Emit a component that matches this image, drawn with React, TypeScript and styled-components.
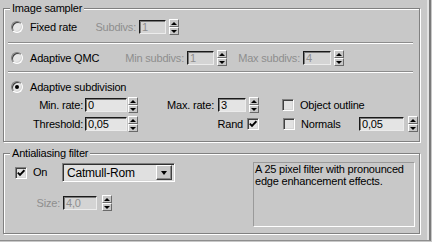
import React from 'react';
import styled, { createGlobalStyle } from 'styled-components';

const GlobalStyle = createGlobalStyle`
  html, body {
    margin: 0;
    padding: 0;
    background: #c8c8c8;
  }
  body {
    font-family: 'Liberation Sans', Arial, sans-serif;
    font-size: 11px;
    letter-spacing: -0.2px;
    color: #000;
  }
`;

const Rollout = styled.div`
  box-sizing: border-box;
  width: 431px;
  height: 241px;
  padding: 8px 0 0 3px;
  background: #c8c8c8;
  border-right: 2px solid #7a7a7a;
  border-bottom: 1px solid #8e8e8e;
  box-shadow: inset -2px 0 0 #e2e2e2;
`;

const GroupBox = styled.div<{ $h: number; $mt?: number }>`
  position: relative;
  box-sizing: border-box;
  width: 417px;
  height: ${(p) => p.$h}px;
  margin-top: ${(p) => p.$mt ?? 0}px;
  border: 1px solid #808080;
  box-shadow: inset 1px 1px 0 #fff, 1px 1px 0 #fff;
`;

const SamplerBody = styled.div`
  padding-left: 7px;
`;

const FilterBody = styled.div`
  display: flex;
  align-items: flex-start;
`;

const GroupTitle = styled.span`
  position: absolute;
  top: -7px;
  left: 6px;
  padding: 0 2px;
  line-height: 13px;
  background: #c8c8c8;
`;

const Row = styled.div<{ $h?: number; $mt?: number }>`
  display: flex;
  align-items: center;
  height: ${(p) => p.$h ?? 16}px;
  margin-top: ${(p) => p.$mt ?? 0}px;
`;

const Separator = styled.div<{ $mt: number }>`
  margin: ${(p) => p.$mt}px 0 0 -3px;
  width: 405px;
  border-top: 1px solid #8c8c8c;
  border-bottom: 1px solid #fff;
`;

const Option = styled.label<{ $w: number }>`
  display: flex;
  align-items: center;
  gap: 7px;
  width: ${(p) => p.$w}px;
  line-height: 13px;
`;

const RadioCircle = styled.span<{ $on?: boolean }>`
  position: relative;
  box-sizing: border-box;
  width: 12px;
  height: 12px;
  border-radius: 50%;
  border: 1px solid;
  border-color: #808080 #fff #fff #808080;
  box-shadow: inset 1px 1px 0 #404040, inset -1px -1px 0 #d6d6d6;
  background: #e6e6e6;
  flex: none;
  &::after {
    content: '';
    display: ${(p) => (p.$on ? 'block' : 'none')};
    position: absolute;
    left: 3px;
    top: 3px;
    width: 4px;
    height: 4px;
    border-radius: 50%;
    background: #000;
  }
`;

const Label = styled.span<{ $w?: number; $right?: boolean; $off?: boolean; $pr?: number; $ml?: number }>`
  display: block;
  box-sizing: border-box;
  width: ${(p) => (p.$w ? `${p.$w}px` : 'auto')};
  margin-left: ${(p) => p.$ml ?? 0}px;
  padding-right: ${(p) => p.$pr ?? 0}px;
  text-align: ${(p) => (p.$right ? 'right' : 'left')};
  color: ${(p) => (p.$off ? '#8e8e8e' : '#000')};
  white-space: nowrap;
  line-height: 13px;
  flex: none;
`;

const Field = styled.div<{ $w: number; $off?: boolean }>`
  box-sizing: border-box;
  width: ${(p) => p.$w}px;
  height: 14px;
  padding-left: 2px;
  border: 1px solid;
  border-color: #1a1a1a #ececec #ececec #1a1a1a;
  box-shadow: inset 1px 1px 0 #7a7a7a;
  background: ${(p) => (p.$off ? '#d4d4d4' : '#e4e4e4')};
  color: ${(p) => (p.$off ? '#8e8e8e' : '#000')};
  line-height: 12px;
  flex: none;
`;

const SpinBox = styled.div<{ $ml?: number }>`
  display: flex;
  flex-direction: column;
  width: 10px;
  height: 16px;
  margin-left: ${(p) => p.$ml ?? 3}px;
  flex: none;
`;

const SpinHalf = styled.div<{ $down?: boolean }>`
  box-sizing: border-box;
  height: 8px;
  display: flex;
  align-items: center;
  justify-content: center;
  border: 1px solid;
  border-color: #fff #6a6a6a #6a6a6a #fff;
  background: #c8c8c8;
  &::after {
    content: '';
    border-left: 3px solid transparent;
    border-right: 3px solid transparent;
    ${(p) => (p.$down ? 'border-top: 3px solid #000;' : 'border-bottom: 3px solid #000;')}
  }
`;

const CheckSquare = styled.span`
  box-sizing: border-box;
  width: 12px;
  height: 12px;
  border: 1px solid;
  border-color: #808080 #fff #fff #808080;
  box-shadow: inset 1px 1px 0 #404040, inset -1px -1px 0 #d6d6d6;
  background: #e2e2e2;
  display: flex;
  align-items: center;
  justify-content: center;
  flex: none;
`;

const Gap = styled.span<{ $w: number }>`
  display: block;
  width: ${(p) => p.$w}px;
  flex: none;
`;

const LeftColumn = styled.div`
  padding: 9px 0 0 11px;
`;

const Dropdown = styled.div`
  box-sizing: border-box;
  width: 113px;
  height: 19px;
  display: flex;
  align-items: center;
  border: 1px solid;
  border-color: #808080 #fff #fff #808080;
  box-shadow: inset 1px 1px 0 #303030, inset -1px -1px 0 #d6d6d6;
  background: #e0e0e0;
  padding: 1px 2px 1px 4px;
  font-size: 12px;
`;

const DropValue = styled.span`
  flex: 1;
  line-height: 14px;
`;

const DropButton = styled.span`
  box-sizing: border-box;
  width: 16px;
  height: 15px;
  display: flex;
  align-items: center;
  justify-content: center;
  border: 1px solid;
  border-color: #fff #404040 #404040 #fff;
  box-shadow: inset -1px -1px 0 #8a8a8a;
  background: #c8c8c8;
  &::after {
    content: '';
    border-left: 3.5px solid transparent;
    border-right: 3.5px solid transparent;
    border-top: 4px solid #000;
  }
`;

const DescBox = styled.div`
  box-sizing: border-box;
  width: 162px;
  height: 65px;
  margin: 8px 4px 0 auto;
  padding: 0 0 0 1px;
  border: 1px solid;
  border-color: #9a9a9a #fff #fff #9a9a9a;
  line-height: 12px;
  font-size: 11px;
`;

const Check = () => (
  <svg width="8" height="8" viewBox="0 0 8 8">
    <path d="M0.8 3.6 L3 5.9 L7.4 1.2" stroke="#000" strokeWidth="1.8" fill="none" />
  </svg>
);

const Spinner: React.FC<{ ml?: number }> = ({ ml }) => (
  <SpinBox $ml={ml}>
    <SpinHalf />
    <SpinHalf $down />
  </SpinBox>
);

const CheckBox: React.FC<{ on?: boolean }> = ({ on }) => (
  <CheckSquare>{on && <Check />}</CheckSquare>
);

const App: React.FC = () => {
  return (
    <>
      <GlobalStyle />
      <Rollout>
        <GroupBox $h={134}>
          <GroupTitle>Image sampler</GroupTitle>
          <SamplerBody>
            <Row $mt={10}>
              <Option $w={82}>
                <RadioCircle />
                Fixed rate
              </Option>
              <Label $w={46} $right $pr={3} $off>
                Subdivs:
              </Label>
              <Field $w={27} $off>
                1
              </Field>
              <Spinner />
            </Row>
            <Separator $mt={7} />
            <Row $mt={6}>
              <Option $w={113}>
                <RadioCircle />
                Adaptive QMC
              </Option>
              <Label $w={63} $right $pr={3} $off>
                Min subdivs:
              </Label>
              <Field $w={27} $off>
                1
              </Field>
              <Spinner />
              <Label $w={76} $right $pr={3} $off>
                Max subdivs:
              </Label>
              <Field $w={28} $off>
                4
              </Field>
              <Spinner />
            </Row>
            <Separator $mt={5} />
            <Row $h={12} $mt={8}>
              <Option $w={200}>
                <RadioCircle $on />
                Adaptive subdivision
              </Option>
            </Row>
            <Row $mt={4}>
              <Label $w={74} $right $pr={2}>
                Min. rate:
              </Label>
              <Field $w={42}>0</Field>
              <Spinner ml={1} />
              <Label $w={80} $right $pr={4}>
                Max. rate:
              </Label>
              <Field $w={28}>3</Field>
              <Spinner />
              <Gap $w={23} />
              <CheckBox />
              <Label $ml={6}>Object outline</Label>
            </Row>
            <Row $mt={3}>
              <Label $w={74} $right $pr={2}>
                Threshold:
              </Label>
              <Field $w={42}>0,05</Field>
              <Spinner ml={1} />
              <Label $w={109} $right $pr={4}>
                Rand
              </Label>
              <CheckBox on />
              <Gap $w={24} />
              <CheckBox />
              <Label $w={58} $ml={6}>
                Normals
              </Label>
              <Field $w={45}>0,05</Field>
              <Spinner ml={4} />
            </Row>
          </SamplerBody>
        </GroupBox>
        <GroupBox $h={81} $mt={11}>
          <GroupTitle>Antialiasing filter</GroupTitle>
          <FilterBody>
            <LeftColumn>
              <Row $h={19}>
                <CheckBox on />
                <Label $w={29} $ml={6}>
                  On
                </Label>
                <Dropdown>
                  <DropValue>Catmull-Rom</DropValue>
                  <DropButton />
                </Dropdown>
              </Row>
              <Row $mt={13}>
                <Label $w={48} $right $pr={3} $off>
                  Size:
                </Label>
                <Field $w={34} $off>
                  4,0
                </Field>
                <Spinner ml={5} />
              </Row>
            </LeftColumn>
            <DescBox>A 25 pixel filter with pronounced edge enhancement effects.</DescBox>
          </FilterBody>
        </GroupBox>
      </Rollout>
    </>
  );
};

export default App;
